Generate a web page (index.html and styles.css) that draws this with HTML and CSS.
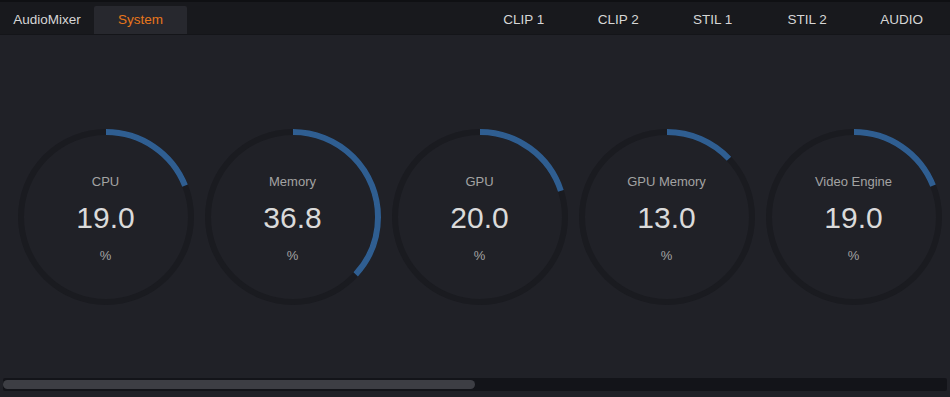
FILE: index.html
```html
<!DOCTYPE html>
<html>
<head>
  <meta charset="UTF-8">
  <title>System</title>
  <link rel="stylesheet" href="styles.css">
</head>
<body>
  <div class="topbar">
    <div class="tabs">
      <div class="tab">AudioMixer</div>
      <div class="tab active">System</div>
    </div>
    <div class="tabs tabs-right">
      <div class="tab">CLIP 1</div>
      <div class="tab">CLIP 2</div>
      <div class="tab">STIL 1</div>
      <div class="tab">STIL 2</div>
      <div class="tab">AUDIO</div>
    </div>
  </div>

  <div class="panel">
    <div class="gauges">
      <div class="gauge">
        <svg class="ring" width="180" height="180" viewBox="0 0 180 180">
          <circle class="track" cx="90" cy="90" r="85"></circle>
          <circle class="level" cx="90" cy="90" r="85" pathLength="100" stroke-dasharray="19.0 100"></circle>
        </svg>
        <div class="readout">
          <span class="label">CPU</span>
          <span class="value">19.0</span>
          <span class="unit">%</span>
        </div>
      </div>
      <div class="gauge">
        <svg class="ring" width="180" height="180" viewBox="0 0 180 180">
          <circle class="track" cx="90" cy="90" r="85"></circle>
          <circle class="level" cx="90" cy="90" r="85" pathLength="100" stroke-dasharray="36.8 100"></circle>
        </svg>
        <div class="readout">
          <span class="label">Memory</span>
          <span class="value">36.8</span>
          <span class="unit">%</span>
        </div>
      </div>
      <div class="gauge">
        <svg class="ring" width="180" height="180" viewBox="0 0 180 180">
          <circle class="track" cx="90" cy="90" r="85"></circle>
          <circle class="level" cx="90" cy="90" r="85" pathLength="100" stroke-dasharray="20.0 100"></circle>
        </svg>
        <div class="readout">
          <span class="label">GPU</span>
          <span class="value">20.0</span>
          <span class="unit">%</span>
        </div>
      </div>
      <div class="gauge">
        <svg class="ring" width="180" height="180" viewBox="0 0 180 180">
          <circle class="track" cx="90" cy="90" r="85"></circle>
          <circle class="level" cx="90" cy="90" r="85" pathLength="100" stroke-dasharray="13.0 100"></circle>
        </svg>
        <div class="readout">
          <span class="label">GPU Memory</span>
          <span class="value">13.0</span>
          <span class="unit">%</span>
        </div>
      </div>
      <div class="gauge">
        <svg class="ring" width="180" height="180" viewBox="0 0 180 180">
          <circle class="track" cx="90" cy="90" r="85"></circle>
          <circle class="level" cx="90" cy="90" r="85" pathLength="100" stroke-dasharray="19.0 100"></circle>
        </svg>
        <div class="readout">
          <span class="label">Video Engine</span>
          <span class="value">19.0</span>
          <span class="unit">%</span>
        </div>
      </div>
    </div>

    <div class="scrollbar">
      <div class="thumb"></div>
    </div>
  </div>
</body>
</html>
```

FILE: styles.css
```css
body {
  font-family: "Liberation Sans", Arial, sans-serif;
  margin: 0;
  padding: 0;
  overflow: hidden;
  background-color: #202127;
  height: 397px;
}

.topbar {
  display: flex;
  justify-content: space-between;
  align-items: flex-end;
  height: 32px;
  background-color: #18191d;
  border-top: 2px solid #0f1013;
  border-bottom: 1px solid #141519;
}

.tabs {
  display: flex;
  align-items: flex-end;
  height: 100%;
}

.tabs-right {
  margin-right: 1px;
}

.tab {
  width: 94px;
  height: 28px;
  line-height: 27px;
  text-align: center;
  font-size: 13.5px;
  color: #d6d6d6;
}

.tabs-right .tab {
  width: 94.5px;
}

.tab.active {
  background-color: #27282e;
  color: #e8761c;
  border-radius: 2px 2px 0 0;
  width: 93px;
}

.panel {
  display: flex;
  flex-direction: column;
  height: 362px;
}

.gauges {
  display: flex;
  padding: 92px 0 0 12px;
}

.gauge {
  width: 187px;
  display: grid;
  justify-items: center;
  align-items: center;
}

.ring,
.readout {
  grid-area: 1 / 1;
}

.ring {
  transform: rotate(-90deg);
}

.ring circle {
  fill: none;
  stroke-width: 6;
}

.track {
  stroke: #1a1b20;
}

.level {
  stroke: #2f5e91;
}

.readout {
  display: flex;
  flex-direction: column;
  align-items: center;
  padding-top: 4px;
}

.label {
  font-size: 13px;
  line-height: 16px;
  color: #a3a3a3;
  margin-bottom: 11px;
}

.value {
  font-size: 30px;
  line-height: 34px;
  color: #dadada;
}

.unit {
  font-size: 13px;
  line-height: 16px;
  color: #a3a3a3;
  margin-top: 13px;
}

.scrollbar {
  margin: auto 3px 6px 3px;
  padding: 2px 0;
  height: 9px;
  background-color: #131419;
  border-radius: 2px;
}

.thumb {
  width: 50%;
  height: 100%;
  background-color: #3d3e44;
  border-radius: 5px;
}
```
